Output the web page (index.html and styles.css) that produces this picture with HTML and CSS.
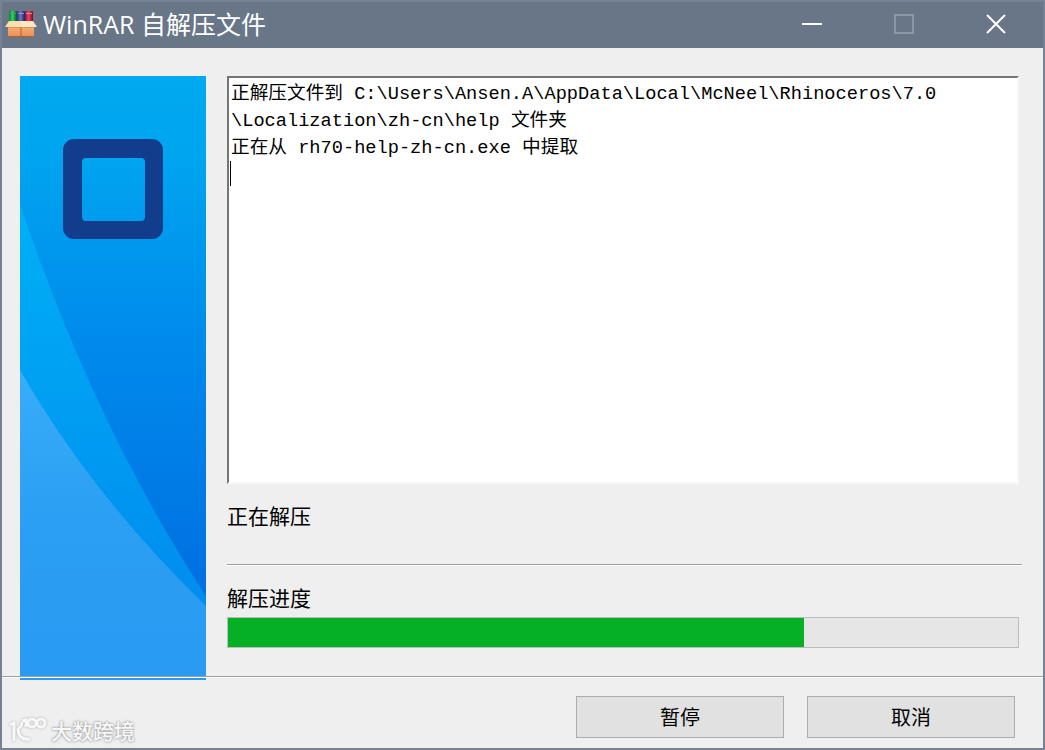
FILE: index.html
```html
<!DOCTYPE html>
<html lang="zh-CN">
<head>
<meta charset="utf-8">
<meta name="viewport" content="width=device-width, initial-scale=1">
<title>WinRAR 自解压文件</title>
<link rel="stylesheet" href="styles.css">
</head>
<body>
<div class="window">
  <header class="titlebar">
    <svg class="app-icon" viewBox="0 0 32 28" aria-hidden="true">
      <defs>
        <linearGradient id="bg" x2="1" y2="0"><stop offset="0" stop-color="#0c7a35"/><stop offset=".45" stop-color="#35cf62"/><stop offset="1" stop-color="#065226"/></linearGradient>
        <linearGradient id="bb" x2="1" y2="0"><stop offset="0" stop-color="#2c3282"/><stop offset=".45" stop-color="#6c74cf"/><stop offset="1" stop-color="#191d57"/></linearGradient>
        <linearGradient id="br" x2="1" y2="0"><stop offset="0" stop-color="#8d1029"/><stop offset=".45" stop-color="#e2486a"/><stop offset="1" stop-color="#780820"/></linearGradient>
        <linearGradient id="box" x2="0" y2="1"><stop offset="0" stop-color="#f9bd8b"/><stop offset="1" stop-color="#ec8f56"/></linearGradient>
      </defs>
      <path fill="#1b1d2c" d="M4 2h24v12H4z"/>
      <rect x="4" y="1" width="8" height="12" rx="1" fill="url(#bg)"/>
      <rect x="12" y="1" width="8" height="12" rx="1" fill="url(#bb)"/>
      <rect x="20" y="1" width="8" height="12" rx="1" fill="url(#br)"/>
      <path fill="#3fae54" d="M5 3h6v1H5z"/>
      <path fill="#8d96dc" d="M13 3h6v1h-6z"/>
      <path fill="#ee8399" d="M21 3h6v1h-6z"/>
      <path fill="url(#box)" d="M3 12h26v14.500H3z"/>
      <path fill="#b65d2c" d="M3 26h26v1H3zM15.500 17h1v9h-1z"/>
      <path fill="#fbe0ae" d="M4 11h12v6H0z"/>
      <path fill="#fde9c1" d="M16 11h12l4 6H16z"/>
      <path fill="#c98448" d="M3 17h26v.6H3z"/>
    </svg>
    <h1 class="title">WinRAR 自解压文件</h1>
    <div class="controls">
      <button class="control" type="button" aria-label="最小化">
        <svg viewBox="0 0 20 20"><path d="M0 10h20"/></svg>
      </button>
      <button class="control" type="button" aria-label="最大化" disabled>
        <svg viewBox="0 0 20 20"><path d="M1 1h18v18H1z"/></svg>
      </button>
      <button class="control" type="button" aria-label="关闭">
        <svg viewBox="0 0 20 20"><path d="M1 1l18 18M19 1L1 19"/></svg>
      </button>
    </div>
  </header>

  <main class="content">
    <svg class="banner" viewBox="0 0 186 604" preserveAspectRatio="none" aria-hidden="true">
      <defs>
        <linearGradient id="sky" gradientUnits="userSpaceOnUse" x1="0" y1="0" x2="0" y2="521"><stop offset="0" stop-color="#00a9f0"/><stop offset=".15" stop-color="#00a5f0"/><stop offset=".5" stop-color="#008bec"/><stop offset="1" stop-color="#006fe2"/></linearGradient>
        <linearGradient id="band" gradientUnits="userSpaceOnUse" x1="0" y1="128" x2="0" y2="530"><stop offset="0" stop-color="#00b0f6"/><stop offset="1" stop-color="#008cee"/></linearGradient>
        <linearGradient id="hill" gradientUnits="userSpaceOnUse" x1="0" y1="294" x2="0" y2="604"><stop offset="0" stop-color="#38adf8"/><stop offset=".5" stop-color="#2a9ff3"/><stop offset="1" stop-color="#2a9af2"/></linearGradient>
      </defs>
      <path fill="url(#sky)" d="M0 0h186v604H0z"/>
      <path fill="url(#band)" d="M0 128Q74 349 186 520V604H0z"/>
      <path fill="url(#hill)" d="M0 294Q73 421 186 530V604H0z"/>
      <path fill="#123d8c" fill-rule="evenodd" d="M54 63h78a11 11 0 0 1 11 11v78a11 11 0 0 1-11 11H54a11 11 0 0 1-11-11V74a11 11 0 0 1 11-11zM66 82a4 4 0 0 0-4 4v55a4 4 0 0 0 4 4h55a4 4 0 0 0 4-4V86a4 4 0 0 0-4-4z"/>
    </svg>

    <div class="panel">
      <div class="log-box">
        <textarea class="log" aria-label="解压日志" readonly spellcheck="false">正解压文件到 C:\Users\Ansen.A\AppData\Local\McNeel\Rhinoceros\7.0
\Localization\zh-cn\help 文件夹
正在从 rh70-help-zh-cn.exe 中提取
</textarea>
        <span class="caret"></span>
      </div>
      <p class="status">正在解压</p>
      <hr class="divider">
      <label class="progress-label" for="progress">解压进度</label>
      <progress class="progress" id="progress" value="729" max="1000"></progress>
    </div>
  </main>

  <footer class="footer">
    <div class="brand">
      <svg class="brand-logo" viewBox="0 0 38 28" aria-hidden="true">
        <path d="M1 9l4-2v18M13 6c0 3-1 5-4 7c0 7 4 11 12 10M13 5l4-1v7"/>
        <circle cx="23" cy="7" r="4"/>
        <circle cx="32" cy="7" r="4"/>
      </svg>
      <span class="brand-name">大数跨境</span>
    </div>
    <button class="button" type="button">暂停</button>
    <button class="button" type="button">取消</button>
  </footer>
</div>
</body>
</html>
```
FILE: styles.css
```css
* {
  box-sizing: border-box;
}

body {
  margin: 0;
  font-family: "Noto Sans CJK SC", sans-serif;
  font-size: 21px;
  line-height: 28px;
  color: #000;
}

.window {
  display: flex;
  flex-direction: column;
  min-height: 100vh;
  border: 2px solid #758296;
  background: #efefef;
}

.titlebar {
  display: flex;
  align-items: center;
  height: 46px;
  padding: 0 1px 2px 3px;
  background: #687688;
  color: #fff;
}

.app-icon {
  width: 32px;
  height: 28px;
}

.title {
  flex: 1;
  margin: 0 0 0 6px;
  font-family: "Open Sans", "Noto Sans CJK SC", sans-serif;
  font-size: 25px;
  font-weight: 400;
  line-height: 32px;
}

.controls {
  display: flex;
}

.control {
  display: flex;
  align-items: center;
  justify-content: center;
  width: 92px;
  height: 44px;
  padding: 0;
  border: 0;
  background: none;
  color: #fff;
}

.control:disabled {
  color: #8c97a5;
}

.control svg {
  width: 20px;
  height: 20px;
  overflow: visible;
  fill: none;
  stroke: currentColor;
  stroke-width: 2;
}

.content {
  flex: 1;
  display: grid;
  grid-template-columns: 186px 1fr;
  gap: 21px;
  padding: 28px 21px 0 18px;
}

.banner {
  width: 100%;
  height: calc(100% + 4px);
  margin-bottom: -4px;
}

.panel {
  display: flex;
  flex-direction: column;
  padding-bottom: 28px;
}

.log-box {
  position: relative;
  flex: 1;
  display: flex;
  margin-right: 3px;
}

.log {
  flex: 1;
  width: 100%;
  padding: 3px 2px;
  border: 2px solid;
  border-color: #757575 #f7f7f7 #f7f7f7 #757575;
  border-radius: 0;
  outline: 0;
  resize: none;
  background: #fff;
  color: #000;
  font-family: "Liberation Mono", "Noto Sans CJK SC", monospace;
  font-size: 20px;
  font-size-adjust: ch-width 0.56;
  line-height: 27px;
}

.caret {
  position: absolute;
  top: 85px;
  left: 3px;
  width: 1px;
  height: 25px;
  background: #000;
}

.status {
  margin: 17px 0 0;
}

.divider {
  width: 100%;
  height: 2px;
  margin: 35px 0 17px;
  border: 0;
  border-top: 1px solid #a0a0a0;
  background: #fff;
}

.progress {
  appearance: none;
  display: block;
  width: calc(100% - 3px);
  height: 31px;
  margin-top: 6px;
  border: 1px solid #bcbcbc;
  background: #e6e6e6;
}

.progress::-webkit-progress-bar {
  background: #e6e6e6;
}

.progress::-webkit-progress-value {
  background: #06b025;
}

.footer {
  position: relative;
  display: flex;
  align-items: flex-start;
  gap: 23px;
  padding: 19px 28px 10px 7px;
  border-top: 1px solid #a0a0a0;
  box-shadow: inset 0 1px #fff;
}

.brand {
  flex: 1;
  display: flex;
  align-items: center;
  gap: 4px;
  align-self: flex-end;
  margin-bottom: -6px;
}

.brand-logo {
  width: 38px;
  height: 28px;
  overflow: visible;
  fill: none;
  stroke: #f8f8f8;
  stroke-width: 3;
  filter: drop-shadow(0 0 1px #aaa);
}

.brand-name {
  color: #f8f8f8;
  font-weight: 500;
  text-shadow: 0 0 2px #999, 0 0 3px #aaa;
}

.button {
  width: 208px;
  height: 42px;
  padding: 0;
  border: 1px solid #adadad;
  border-radius: 0;
  background: #e1e1e1;
  color: #000;
  font-family: inherit;
  font-size: 20px;
  line-height: 28px;
}
```
